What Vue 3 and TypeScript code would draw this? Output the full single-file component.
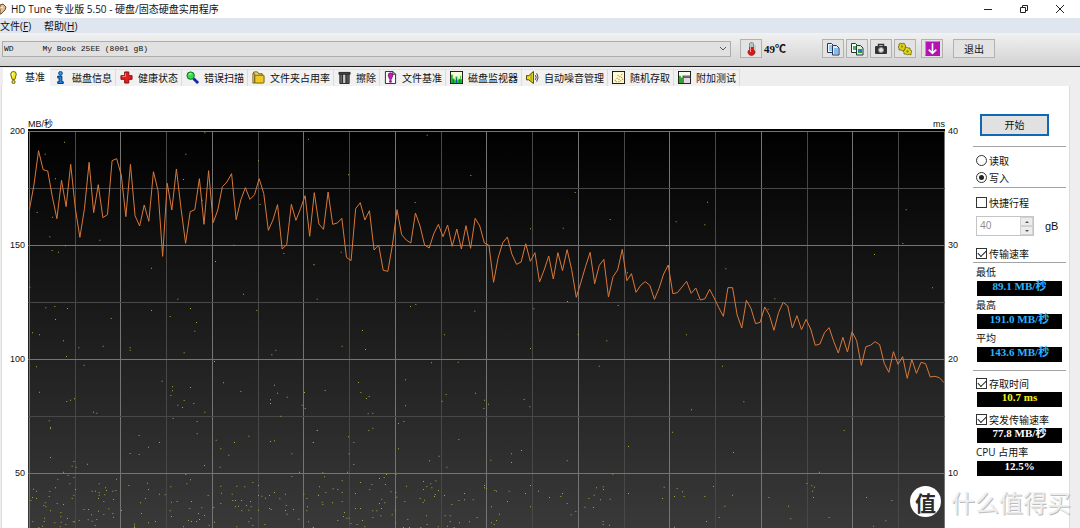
<script setup lang="ts">
import { ref } from 'vue'

interface Tab {
  id: string
  label: string
}

interface DotGroup {
  x: number
  y: number
  points: number[][]
}

const tabs: Tab[] = [
  { id: 'bench', label: '基准' },
  { id: 'info', label: '磁盘信息' },
  { id: 'health', label: '健康状态' },
  { id: 'scan', label: '错误扫描' },
  { id: 'folder', label: '文件夹占用率' },
  { id: 'erase', label: '擦除' },
  { id: 'filebench', label: '文件基准' },
  { id: 'monitor', label: '磁盘监视器' },
  { id: 'aam', label: '自动噪音管理' },
  { id: 'random', label: '随机存取' },
  { id: 'extra', label: '附加测试' },
]
const activeTab = ref('bench')
const mode = ref('write')
const shortStroke = ref(false)
const transferRate = ref(true)
const accessTime = ref(true)
const burstRate = ref(true)

const speedAxis = [200, 150, 100, 50]
const timeAxis = [40, 30, 20, 10]

// Plot units: three per pixel of the chart at its natural size.
const columns = Array.from({ length: 21 }, (_, i) => ({ x: 88 + i * 137.25, major: i % 2 === 0 }))
const rows = Array.from({ length: 7 }, (_, i) => ({ y: 33 + i * 171, major: i % 2 === 0 }))

const samples: number[] = [
  270, 195, 92, 149, 153, 230, 296, 181, 260, 133, 265, 352, 265, 127, 278, 194, 293, 284, 122, 116,
  165, 290, 133, 287, 318, 255, 304, 155, 212, 409, 190, 270, 147, 265, 370, 275, 269, 176, 313, 152,
  308, 270, 200, 186, 161, 299, 240, 203, 238, 224, 176, 220, 331, 300, 254, 387, 374, 253, 301, 266,
  227, 349, 218, 312, 328, 216, 313, 309, 295, 412, 422, 266, 248, 300, 272, 390, 375, 451, 454, 375,
  269, 344, 360, 369, 279, 318, 375, 384, 341, 313, 350, 315, 379, 327, 387, 317, 385, 295, 318, 369,
  376, 487, 413, 368, 351, 403, 433, 426, 371, 424, 398, 486, 450, 408, 477, 398, 452, 389, 449, 532,
  487, 440, 397, 491, 436, 418, 531, 470, 450, 388, 482, 461, 517, 496, 485, 496, 538, 505, 462, 435,
  521, 518, 501, 484, 520, 504, 540, 536, 508, 534, 563, 589, 503, 503, 585, 624, 541, 565, 611, 607,
  561, 585, 631, 578, 547, 558, 624, 587, 629, 598, 627, 676, 672, 638, 623, 664, 699, 652, 696, 635,
  662, 736, 680, 676, 665, 674, 730, 757, 695, 733, 710, 775, 718, 760, 727, 731, 771, 769, 773, 788,
]
const step = (2832 - 88) / (samples.length - 1)
const trace = samples.map((y, i) => `${(88 + i * step).toFixed(1)},${y}`).join(' ')

const dotGroups: DotGroup[] = [
  {
    x: 0, y: 0,
    points: [
      [193, 66], [135, 102], [166, 176], [111, 277], [157, 291], [149, 350], [299, 360], [196, 377], [156, 391],
      [175, 396], [454, 444], [89, 501], [137, 563], [164, 559], [202, 565], [166, 598], [333, 595], [454, 571],
      [533, 537], [571, 565], [510, 589], [614, 38], [557, 102], [550, 178], [775, 122], [925, 57], [780, 253],
      [701, 375], [646, 424], [730, 522], [770, 571], [942, 434], [951, 537], [851, 400], [606, 240],
    ],
  },
  {
    x: 900, y: 0,
    points: [
      [381, 45], [145, 164], [512, 166], [345, 247], [825, 217], [930, 298], [691, 326], [789, 324], [123, 396],
      [41, 434], [331, 559], [347, 553], [524, 573], [701, 566], [802, 544], [954, 556],
    ],
  },
  {
    x: 1860, y: 180,
    points: [
      [262, 66], [168, 125], [254, 134], [139, 197], [317, 266], [464, 356], [199, 464], [307, 558], [858, 89],
      [848, 190], [763, 223], [937, 323], [22, 278], [233, 358], [444, 387],
    ],
  },
  {
    x: 0, y: 600,
    points: [
      [97, 38], [118, 44], [190, 62], [236, 83], [309, 78], [390, 83], [390, 90], [199, 109], [252, 135], [109, 140],
      [118, 216], [200, 244], [211, 240], [223, 236], [280, 276], [290, 279], [147, 302], [151, 322], [151, 326],
      [589, 7], [584, 33], [552, 98], [486, 183], [517, 200], [517, 212], [512, 226], [571, 202], [533, 255],
      [547, 262], [552, 241], [581, 250], [614, 276], [519, 295], [591, 304], [591, 341], [417, 346], [478, 367],
      [445, 381], [390, 400], [417, 403], [643, 124], [670, 188], [722, 214], [815, 104], [827, 90], [823, 195],
      [832, 219], [811, 239], [811, 250], [861, 231], [913, 217], [906, 255], [915, 265], [842, 288], [952, 331],
      [939, 367], [811, 364], [823, 362], [746, 348], [703, 367], [648, 360], [662, 386], [686, 405], [660, 441],
      [875, 401], [898, 456], [875, 469], [613, 436], [557, 463], [571, 479], [560, 491], [151, 412], [221, 424],
      [216, 438], [228, 441], [262, 432], [190, 456], [204, 466], [221, 472], [173, 477], [209, 491], [349, 477],
      [386, 496], [442, 489], [445, 508], [512, 500], [478, 522], [495, 524], [436, 535], [421, 548], [514, 546],
      [531, 544], [574, 544], [569, 565], [510, 572], [514, 589], [424, 580], [445, 608], [466, 604], [403, 612],
      [403, 618], [403, 622], [100, 507], [109, 513], [97, 532], [109, 535], [92, 541], [166, 503], [149, 514],
      [147, 529], [226, 508], [221, 525], [216, 535], [135, 548], [131, 556], [137, 560], [171, 550], [190, 553],
      [151, 572], [182, 577], [202, 595], [182, 590], [133, 594], [132, 604], [98, 604], [164, 608], [183, 606],
      [197, 613], [219, 605], [223, 605], [237, 601], [180, 620], [116, 622], [127, 618], [297, 491], [276, 513],
      [286, 513], [297, 517], [297, 525], [316, 503], [319, 511], [314, 524], [311, 544], [295, 535], [338, 513],
      [347, 511], [340, 538], [252, 568], [265, 568], [274, 584], [264, 599], [276, 603], [285, 616], [290, 598],
      [311, 583], [326, 566], [340, 591], [364, 571], [295, 573], [338, 580], [624, 526], [605, 563], [595, 580],
      [613, 586], [598, 598], [589, 604], [574, 604], [565, 601], [550, 620], [643, 606], [627, 615], [641, 562],
      [662, 498], [664, 519], [662, 550], [710, 498], [734, 500], [758, 487], [775, 496], [696, 522], [698, 541],
      [706, 541], [706, 560], [715, 558], [724, 541], [725, 572], [751, 544], [739, 556], [753, 560], [746, 570],
      [753, 594], [746, 605], [758, 616], [710, 620], [775, 526], [785, 528], [796, 534], [808, 526], [823, 517],
      [808, 565], [813, 568], [775, 570], [839, 536], [856, 522], [858, 556], [856, 571], [861, 582], [880, 568],
      [896, 597], [911, 522], [920, 535], [922, 560], [920, 572], [925, 605], [794, 613], [939, 621], [955, 526],
      [958, 500],
    ],
  },
  {
    x: 930, y: 600,
    points: [
      [157, 31], [96, 78], [166, 88], [403, 44], [661, 85], [804, 44], [890, 62], [867, 138], [364, 128], [444, 126],
      [286, 179], [145, 187], [152, 217], [177, 229], [169, 235], [45, 211], [286, 257], [174, 281], [188, 279],
      [188, 324], [176, 331], [21, 331], [10, 367], [115, 350], [131, 367], [117, 401], [131, 433], [112, 456],
      [265, 310], [281, 304], [265, 386], [396, 243], [408, 223], [496, 219], [523, 240], [535, 252], [521, 265],
      [642, 238], [659, 260], [446, 358], [387, 408], [358, 422], [410, 441], [542, 420], [604, 401], [604, 427],
      [634, 391], [771, 422], [955, 379], [908, 462], [38, 458], [43, 470], [28, 500], [25, 525], [47, 517],
      [36, 546], [38, 553], [69, 506], [83, 508], [96, 482], [96, 517], [67, 548], [96, 544], [151, 487], [185, 493],
      [179, 508], [136, 520], [208, 475], [222, 472], [229, 463], [257, 463], [226, 493], [243, 515], [257, 517],
      [260, 531], [215, 537], [208, 550], [224, 548], [136, 565], [151, 565], [188, 572], [200, 572], [214, 565],
      [188, 592], [212, 587], [246, 584], [256, 570], [256, 608], [103, 577], [100, 589], [110, 594], [117, 594],
      [83, 601], [122, 610], [141, 613], [157, 601], [164, 620], [289, 498], [284, 544], [340, 484], [350, 499],
      [362, 491], [377, 482], [340, 508], [365, 503], [385, 511], [375, 523], [373, 529], [330, 535], [343, 540],
      [339, 547], [403, 526], [349, 587], [293, 598], [351, 613], [384, 620], [405, 587], [420, 587], [420, 604],
      [412, 618], [432, 622], [280, 622], [298, 622], [332, 622], [425, 553], [446, 541], [463, 520], [463, 539],
      [489, 539], [448, 608], [478, 605], [501, 592], [523, 496], [523, 503], [529, 505], [554, 511], [559, 513],
      [597, 513], [592, 544], [544, 560], [568, 582], [559, 601], [544, 608], [552, 613], [646, 520], [661, 496],
      [661, 560], [685, 513], [718, 532], [757, 520], [752, 529], [771, 550], [797, 574], [783, 584], [824, 561],
      [836, 535], [852, 525], [859, 503], [879, 500], [880, 508], [871, 539], [850, 562], [900, 537], [879, 604],
      [879, 613], [898, 615], [955, 520], [10, 622],
    ],
  },
  {
    x: 1890, y: 780,
    points: [
      [184, 89], [341, 65], [127, 156], [310, 217], [642, 151], [568, 276], [102, 321], [141, 325], [157, 335],
      [162, 349], [133, 349], [97, 355], [250, 319], [307, 345], [224, 349], [284, 378], [267, 412], [229, 424],
      [133, 441], [416, 352], [475, 378], [482, 416], [530, 310], [545, 317], [553, 321], [547, 333], [550, 352],
      [597, 412], [709, 352], [785, 361], [767, 422], [730, 438],
    ],
  },
]
const dots = dotGroups
  .flatMap((g) => g.points.map((p) => `M${g.x + p[0] - 1} ${g.y + p[1] - 1}h3v3h-3z`))
  .join('')
</script>

<template>
  <div class="window">
    <header class="titlebar">
      <svg class="app-icon" viewBox="0 0 7 12" aria-hidden="true">
        <path d="M0 2 3 1l3 3-1 3-4 4H0z" fill="#e4bf91" stroke="#6b4a2c" />
        <path d="M0 5l3-1" stroke="#fff2dc" />
      </svg>
      <h1>HD Tune 专业版 5.50 - 硬盘/固态硬盘实用程序</h1>
      <div class="window-buttons">
        <button type="button" aria-label="最小化">
          <svg viewBox="0 0 10 10"><path d="M1 5.5h8" /></svg>
        </button>
        <button type="button" aria-label="还原">
          <svg viewBox="0 0 10 10"><path d="M1.500 3.500h5v5h-5zM3.500 3V1.500h5v5H7" /></svg>
        </button>
        <button type="button" aria-label="关闭">
          <svg viewBox="0 0 10 10"><path d="M1 1l8 8M9 1 1 9" /></svg>
        </button>
      </div>
    </header>

    <nav class="menubar">
      <button type="button">文件(<u>F</u>)</button>
      <button type="button">帮助(<u>H</u>)</button>
    </nav>

    <div class="toolbar">
      <div class="drive">
        <select aria-label="硬盘">
          <option>WD&nbsp;&nbsp;&nbsp;&nbsp;&nbsp;&nbsp;My Book 25EE (8001 gB)</option>
        </select>
        <svg class="chevron" viewBox="0 0 8 6" aria-hidden="true"><path d="M1 1l3 3 3-3" /></svg>
      </div>
      <button type="button" class="tool thermo" aria-label="温度">
        <svg viewBox="0 0 14 14">
          <path d="M5.500 1.500q2-2 4 0v6q2 1.500 1.500 3.500-1 2.500-3.500 2.500T4 11q-.5-2 1.500-3.500z" fill="#d51a1a" stroke="#7a1212" stroke-width=".6" />
          <path d="M5.500 1.500q2-2 4 0V5h-4z" fill="#a9c9c4" />
          <path d="M6.500 5v5" stroke="#ff9a9a" />
          <path d="M10 4h2M10 6h2M10 8h2" stroke="#999" stroke-width=".6" />
        </svg>
      </button>
      <output class="temperature">49℃</output>
      <button type="button" class="tool" aria-label="复制文本">
        <svg viewBox="0 0 14 14">
          <path d="M1.500 1.500h4l2 2v7h-6z" fill="#f4fbff" stroke="#26345c" />
          <path d="M3 4h3M3 6h3M3 8h3" stroke="#38a6ea" />
          <path d="M6.500 3.500h4l2.500 2.500v7h-6.500z" fill="#d8efff" stroke="#26345c" />
          <path d="M8 7h4M8 9h4M8 11h4" stroke="#2d8dde" />
        </svg>
      </button>
      <button type="button" class="tool" aria-label="复制图像">
        <svg viewBox="0 0 14 14">
          <path d="M1.500 1.500h4l2 2v7h-6z" fill="#f4fff4" stroke="#26343c" />
          <path d="M3 4h3v4H3z" fill="#46b84a" />
          <path d="M6.500 3.500h4l2.500 2.500v7h-6.500z" fill="#d6f2dc" stroke="#26343c" />
          <path d="M8 7h4v4H8z" fill="#21a829" />
          <path d="M8 9l2-1 2 2" stroke="#2468c8" fill="none" />
        </svg>
      </button>
      <button type="button" class="tool" aria-label="截图">
        <svg viewBox="0 0 14 14">
          <path d="M4.500 4V2.500h5V4" fill="none" stroke="#333" stroke-width="1.500" />
          <rect x="1" y="4" width="12" height="8" rx="1" fill="#333" />
          <circle cx="7" cy="8" r="2.500" fill="#dfe9e6" stroke="#888" />
        </svg>
      </button>
      <button type="button" class="tool" aria-label="选项">
        <svg viewBox="0 0 14 14">
          <path d="M3 1l1 1 2-1 1 2 1 1-1 1 1 2-2 1-1 1-2-1-2 0V6L0 5l1-1V2z" fill="#d8cf16" stroke="#6e6800" stroke-width=".8" />
          <path d="M8 5l2 1 2 0v2l2 1-1 2v2l-2-1-1 1-2-1-2 0V10L5 9l2-1V6z" fill="#e5dc1f" stroke="#6e6800" stroke-width=".8" />
          <circle cx="4" cy="4.500" r="1" fill="#8a8200" />
          <circle cx="9.500" cy="9.500" r="1.200" fill="#8a8200" />
        </svg>
      </button>
      <button type="button" class="tool arrow" aria-label="最小化到托盘">
        <svg viewBox="0 0 14 14">
          <rect width="14" height="14" fill="#b512b5" />
          <path d="M.5 13.500V.5h13" fill="none" stroke="#e373e3" />
          <path d="M7 2v9M3.500 8 7 11.500 10.500 8" fill="none" stroke="#fff" stroke-width="1.500" />
        </svg>
      </button>
      <button type="button" class="exit">退出</button>
    </div>

    <div class="tabs" role="tablist">
      <button
        v-for="tab in tabs"
        :key="tab.id"
        type="button"
        role="tab"
        class="tab"
        :class="{ active: tab.id === activeTab }"
        :aria-selected="tab.id === activeTab"
        @click="activeTab = tab.id"
      >
        <svg viewBox="0 0 14 14" aria-hidden="true">
          <template v-if="tab.id === 'bench'">
            <path d="M7 .5Q10 .5 10 3.500L8.500 9h-3L4 3.500Q4 .5 7 .5z" fill="#f4e91c" stroke="#5d5600" />
            <circle cx="7" cy="11.800" r="1.700" fill="#f4e91c" stroke="#5d5600" />
            <path d="M6 2v3" stroke="#fff" />
          </template>
          <template v-else-if="tab.id === 'info'">
            <circle cx="7" cy="2.500" r="2" fill="#2a9be8" stroke="#0d3f78" />
            <path d="M4 5.500h4.500v6H10v2H4v-2h1.500v-4H4z" fill="#1c82dc" stroke="#0d3068" />
          </template>
          <template v-else-if="tab.id === 'health'">
            <path d="M5 1h4.500v4H13v4H9.500v4H5V9H1V5h4z" fill="#e31c1c" stroke="#7c1010" />
            <path d="M6 2.500v3.500H2.500" fill="none" stroke="#ff8383" />
          </template>
          <template v-else-if="tab.id === 'scan'">
            <path d="M8 8l5 5" stroke="#1a26a8" stroke-width="3" />
            <circle cx="5" cy="5" r="4" fill="#34df4a" stroke="#145c20" />
            <path d="M3 4q1-1.500 3-1" fill="none" stroke="#d9ffd9" />
          </template>
          <template v-else-if="tab.id === 'folder'">
            <path d="M1 3l1-2h4l1 2h4v2" fill="#f5e06c" stroke="#6b5706" />
            <path d="M1 3h2v10H1z" fill="#f9eb9a" stroke="#6b5706" />
            <rect x="3" y="4.500" width="10" height="8.500" rx="1" fill="#eec926" stroke="#6b5706" />
          </template>
          <template v-else-if="tab.id === 'erase'">
            <path d="M1 1.500h12v2H1z" fill="#555" stroke="#222" />
            <path d="M2 3.500h10v10H2z" fill="#666" stroke="#222" />
            <path d="M5 4v9M9.500 4v9" stroke="#222" />
            <path d="M6.500 4v9" stroke="#eee" stroke-width="1.500" />
          </template>
          <template v-else-if="tab.id === 'filebench'">
            <path d="M1.500 .5h8l3 3v10h-11z" fill="#fff" stroke="#222" />
            <path d="M9.500 .5v3h3" fill="none" stroke="#222" />
            <path d="M7 2q2.500 0 2.500 2.500L8 9H6L4.500 4.500Q4.500 2 7 2z" fill="#c31cc3" stroke="#641064" stroke-width=".8" />
            <circle cx="7" cy="11.200" r="1.500" fill="#a010a0" />
          </template>
          <template v-else-if="tab.id === 'monitor'">
            <rect x=".5" y=".5" width="13" height="13" fill="#f8ffd8" stroke="#111" />
            <path d="M1 4h2v4h2v2h1V6h2v4h1V8h1v1h1V5h1v4h1v4H1z" fill="#17c41c" />
            <path d="M3.500 13V9M7 13V8M10.500 13V9" stroke="#1846c4" />
          </template>
          <template v-else-if="tab.id === 'aam'">
            <path d="M.5 5h2.500l5-4.500v13L3 9.500H.5z" fill="#efdf1b" stroke="#3d3800" />
            <path d="M5.500 3.500v7" stroke="#8a8000" />
            <path d="M10 4.500q2 2.500 0 5M11.500 2.500q3 4.500 0 9" fill="none" stroke="#333" />
          </template>
          <template v-else-if="tab.id === 'random'">
            <rect x=".5" y=".5" width="13" height="13" fill="#fffbd0" stroke="#111" />
            <path d="M3 10h1M5 8h1M4 11.500h1M7 9h1M8 6h1M10 7h1M10 4h1M6 5h1M9 10.500h1M11 9h1M7 11.500h1" stroke="#c46e14" stroke-width="1.300" />
          </template>
          <template v-else>
            <rect x=".5" y=".5" width="13" height="13" fill="#f8ffe8" stroke="#111" />
            <path d="M1 5h2v2h2v6H1z" fill="#17b41c" />
            <rect x="5.500" y="5.500" width="8" height="8" fill="#e8d4e4" stroke="#222" />
            <path d="M6 7h7" stroke="#5a4a8c" />
          </template>
        </svg>
        <span>{{ tab.label }}</span>
      </button>
    </div>

    <main class="panel">
      <section class="chart" aria-label="基准">
        <div class="axis left">
          <span v-for="v in speedAxis" :key="v">{{ v }}</span>
        </div>
        <div class="plot">
          <div class="units"><span>MB/秒</span><span>ms</span></div>
          <svg viewBox="84 27 2751 1197" preserveAspectRatio="none">
            <defs>
              <linearGradient id="plot-bg" x1="0" y1="0" x2="0" y2="1">
                <stop offset="0" stop-color="#000" />
                <stop offset="1" stop-color="#393939" />
              </linearGradient>
            </defs>
            <rect x="84" y="27" width="2751" height="1197" fill="url(#plot-bg)" />
            <g class="grid">
              <path v-for="c in columns" :key="c.x" :d="`M${c.x} 33V1224`" :class="{ major: c.major }" />
              <path v-for="r in rows" :key="r.y" :d="`M84 ${r.y}H2835`" :class="{ major: r.major }" />
            </g>
            <path :d="dots" fill="#a8a43a" />
            <polyline :points="trace" class="trace" />
          </svg>
        </div>
        <div class="axis right">
          <span v-for="v in timeAxis" :key="v">{{ v }}</span>
        </div>
      </section>

      <aside class="side">
        <button type="button" class="start">开始</button>
        <hr />
        <div class="modes" role="radiogroup" aria-label="模式">
          <label class="option"><input v-model="mode" type="radio" name="mode" value="read" />读取</label>
          <label class="option"><input v-model="mode" type="radio" name="mode" value="write" />写入</label>
        </div>
        <hr />
        <label class="option stroke"><input v-model="shortStroke" type="checkbox" />快捷行程</label>
        <div class="size">
          <div class="spinner">
            <input id="stroke-size" type="number" value="40" disabled />
            <div class="steps">
              <button type="button" aria-label="增加" disabled><svg viewBox="0 0 6 4"><path d="M1 3l2-2 2 2z" /></svg></button>
              <button type="button" aria-label="减少" disabled><svg viewBox="0 0 6 4"><path d="M1 1l2 2 2-2z" /></svg></button>
            </div>
          </div>
          <label for="stroke-size">gB</label>
        </div>
        <label class="option rate"><input v-model="transferRate" type="checkbox" />传输速率</label>
        <hr />
        <label class="caption" for="min">最低</label>
        <output id="min" class="value cyan">89.1 MB/秒</output>
        <label class="caption" for="max">最高</label>
        <output id="max" class="value cyan">191.0 MB/秒</output>
        <label class="caption" for="avg">平均</label>
        <output id="avg" class="value cyan">143.6 MB/秒</output>
        <hr class="spaced" />
        <label class="option toggle"><input v-model="accessTime" type="checkbox" />存取时间</label>
        <output class="value yellow" aria-label="存取时间">10.7 ms</output>
        <label class="option toggle"><input v-model="burstRate" type="checkbox" />突发传输速率</label>
        <output class="value" aria-label="突发传输速率">77.8 MB/秒</output>
        <label class="caption" for="cpu">CPU 占用率</label>
        <output id="cpu" class="value">12.5%</output>
      </aside>
    </main>

    <div class="watermark"><span class="badge">值</span><span class="brand">什么值得买</span></div>
  </div>
</template>

<style>
body {
  margin: 0;
  background: #eee;
}
</style>

<style scoped>
.window {
  position: relative;
  display: flex;
  flex-direction: column;
  min-height: 100vh;
  overflow: hidden;
  background: #eee;
  color: #111;
  font: 10px/12px "Open Sans", "Noto Sans CJK SC", sans-serif;
}
.window * {
  box-sizing: border-box;
}
button {
  padding: 0;
  border: 0;
  background: none;
  color: inherit;
  font: inherit;
}
.titlebar {
  display: flex;
  align-items: center;
  height: 18px;
  background: #fff;
}
.app-icon {
  width: 7px;
  height: 12px;
  fill: none;
}
.titlebar h1 {
  flex: 1;
  margin: 0 0 0 4px;
  font-size: 10px;
  font-weight: 400;
  white-space: nowrap;
}
.window-buttons {
  display: flex;
  padding-right: 2px;
}
.window-buttons button {
  display: grid;
  place-items: center;
  width: 36px;
  height: 16px;
}
.window-buttons svg {
  width: 10px;
  height: 10px;
  fill: none;
  stroke: #222;
}
.menubar {
  display: flex;
  gap: 13px;
  height: 15px;
  background: #dfe6ef;
}
.toolbar {
  display: flex;
  align-items: center;
  height: 33px;
  padding: 0 85px 2px 2px;
  background: linear-gradient(#f1f1f1, #d2d2d2);
}
.drive {
  display: flex;
  align-items: center;
  flex: 1;
  height: 16px;
  margin-right: 9px;
  padding-right: 3px;
  border: 1px solid #adadad;
  background: #e1e1e1;
}
.drive select {
  flex: 1;
  min-width: 0;
  height: 14px;
  padding: 0 0 0 1px;
  border: 0;
  appearance: none;
  background: none;
  color: #111;
  font: 8px/14px "Liberation Mono", monospace;
}
.chevron {
  width: 8px;
  height: 6px;
  fill: none;
  stroke: #555;
}
.tool,
.exit {
  display: grid;
  place-items: center;
  width: 22px;
  height: 19px;
  margin-right: 2px;
  border: 1px solid #b2b2b2;
  background: #e3e3e3;
}
.tool svg {
  width: 14px;
  height: 14px;
}
.thermo {
  margin-right: 0;
}
.temperature {
  width: 60px;
  padding-left: 2px;
  font: bold 11px/14px "Liberation Serif", "Noto Sans CJK SC", serif;
}
.arrow {
  margin: 0 10px 0 3px;
}
.arrow svg {
  width: 15px;
  height: 15px;
}
.exit {
  width: 42px;
  margin: 0;
}
.tabs {
  display: flex;
  align-items: flex-end;
  height: 20px;
  padding-left: 3px;
  border-top: 1px solid #222;
}
.tab {
  display: flex;
  align-items: center;
  gap: 5px;
  height: 17px;
  padding: 0 3px 1px 4px;
  border-top: 1px solid #e2e2e2;
  border-right: 1px solid #dcdcdc;
  background: #f1f1f1;
  white-space: nowrap;
}
.tab svg {
  flex: none;
  width: 13px;
  height: 13px;
  fill: none;
}
.tab.active {
  height: 18px;
  padding: 0 4px 1px 4px;
  border-color: #fff;
  background: #fff;
}
.panel {
  display: flex;
  flex: 1;
  margin: 0 10px 0 1px;
  padding-right: 3px;
  border: solid #dcdcdc;
  border-width: 0 1px;
  background: #fff;
}
.chart {
  display: flex;
  flex: 1;
}
.axis {
  display: flex;
  flex-direction: column;
  gap: 102px;
  padding-top: 39px;
  font: 9px/12px "Liberation Sans", sans-serif;
}
.left {
  width: 26px;
  padding-right: 3px;
  text-align: right;
}
.right {
  width: 28px;
  padding-left: 3px;
}
.plot {
  flex: 1;
}
.plot svg {
  display: block;
  width: 100%;
  height: 399px;
}
.units {
  display: flex;
  align-items: flex-end;
  justify-content: space-between;
  height: 43px;
  font: 9px/9px "Liberation Sans", "Noto Sans CJK SC", sans-serif;
}
.grid path {
  stroke: #484848;
  stroke-width: 1px;
  vector-effect: non-scaling-stroke;
  shape-rendering: crispEdges;
}
.grid .major {
  stroke: #747474;
}
.trace {
  fill: none;
  stroke: #d9783a;
  stroke-width: 1px;
  vector-effect: non-scaling-stroke;
}
.side {
  width: 93px;
}
.side hr {
  height: 1px;
  margin: 0;
  border: 0;
  background: #a3a3a3;
}
.start {
  display: block;
  width: 69px;
  height: 22px;
  margin: 28px 0 10px 7px;
  border: 2px solid #1068b4;
  background: #e1e1e1;
}
.modes {
  padding: 5px 0 1px;
}
.option {
  display: flex;
  align-items: center;
  gap: 2px;
  height: 17px;
  padding-left: 3px;
  white-space: nowrap;
}
.option input {
  display: grid;
  place-items: center;
  flex: none;
  width: 11px;
  height: 11px;
  margin: 0;
  border: 1px solid #333;
  appearance: none;
  background: #fff;
}
.option input[type="radio"] {
  border-radius: 50%;
}
.option input[type="radio"]:checked::before {
  width: 5px;
  height: 5px;
  border-radius: 50%;
  background: #222;
  content: "";
}
.option input[type="checkbox"]:checked::before {
  width: 7px;
  height: 4px;
  border: solid #222;
  border-width: 0 0 1px 1px;
  transform: translateY(-1px) rotate(-45deg);
  content: "";
}
.stroke {
  margin-top: 6px;
}
.size {
  display: flex;
  align-items: center;
  gap: 11px;
  margin: 5px 0 9px 3px;
  font: 11px/12px "Liberation Sans", sans-serif;
}
.spinner {
  display: flex;
  width: 58px;
  height: 20px;
  border: 1px solid #c4c4c4;
}
.spinner input {
  flex: 1;
  min-width: 0;
  padding: 0 0 2px 3px;
  border: 0;
  appearance: textfield;
  background: #fff;
  color: #8a8a8a;
  font: 10px/14px "Open Sans", sans-serif;
}
.steps {
  display: grid;
  width: 13px;
  background: #ececec;
}
.steps button {
  display: grid;
  place-items: center;
  border: 1px solid #d2d2d2;
}
.steps svg {
  width: 6px;
  height: 4px;
  fill: #555;
}
.caption {
  display: block;
  height: 18px;
  padding-left: 3px;
  line-height: 18px;
}
.value {
  display: block;
  height: 15px;
  margin: 0 4px;
  background: #000;
  color: #fff;
  font: bold 11px/11px "Liberation Serif", "Noto Sans CJK SC", serif;
  text-align: center;
}
.cyan {
  color: #2bb4ff;
}
.yellow {
  color: #f7f31b;
}
.side .spaced {
  margin-top: 8px;
}
.toggle {
  margin-top: 4px;
}
.watermark {
  position: absolute;
  right: 9px;
  bottom: 11px;
  display: flex;
  align-items: center;
  gap: 10px;
}
.badge {
  display: grid;
  place-items: center;
  width: 31px;
  height: 31px;
  border-radius: 50%;
  background: #fff;
  color: #2c2c2c;
  font: bold 21px/30px "Noto Sans CJK SC", sans-serif;
}
.brand {
  color: #eee;
  font: 24px/28px "Noto Sans CJK SC", sans-serif;
  text-shadow: 1px 1px 0 #bdbdbd;
}
</style>
